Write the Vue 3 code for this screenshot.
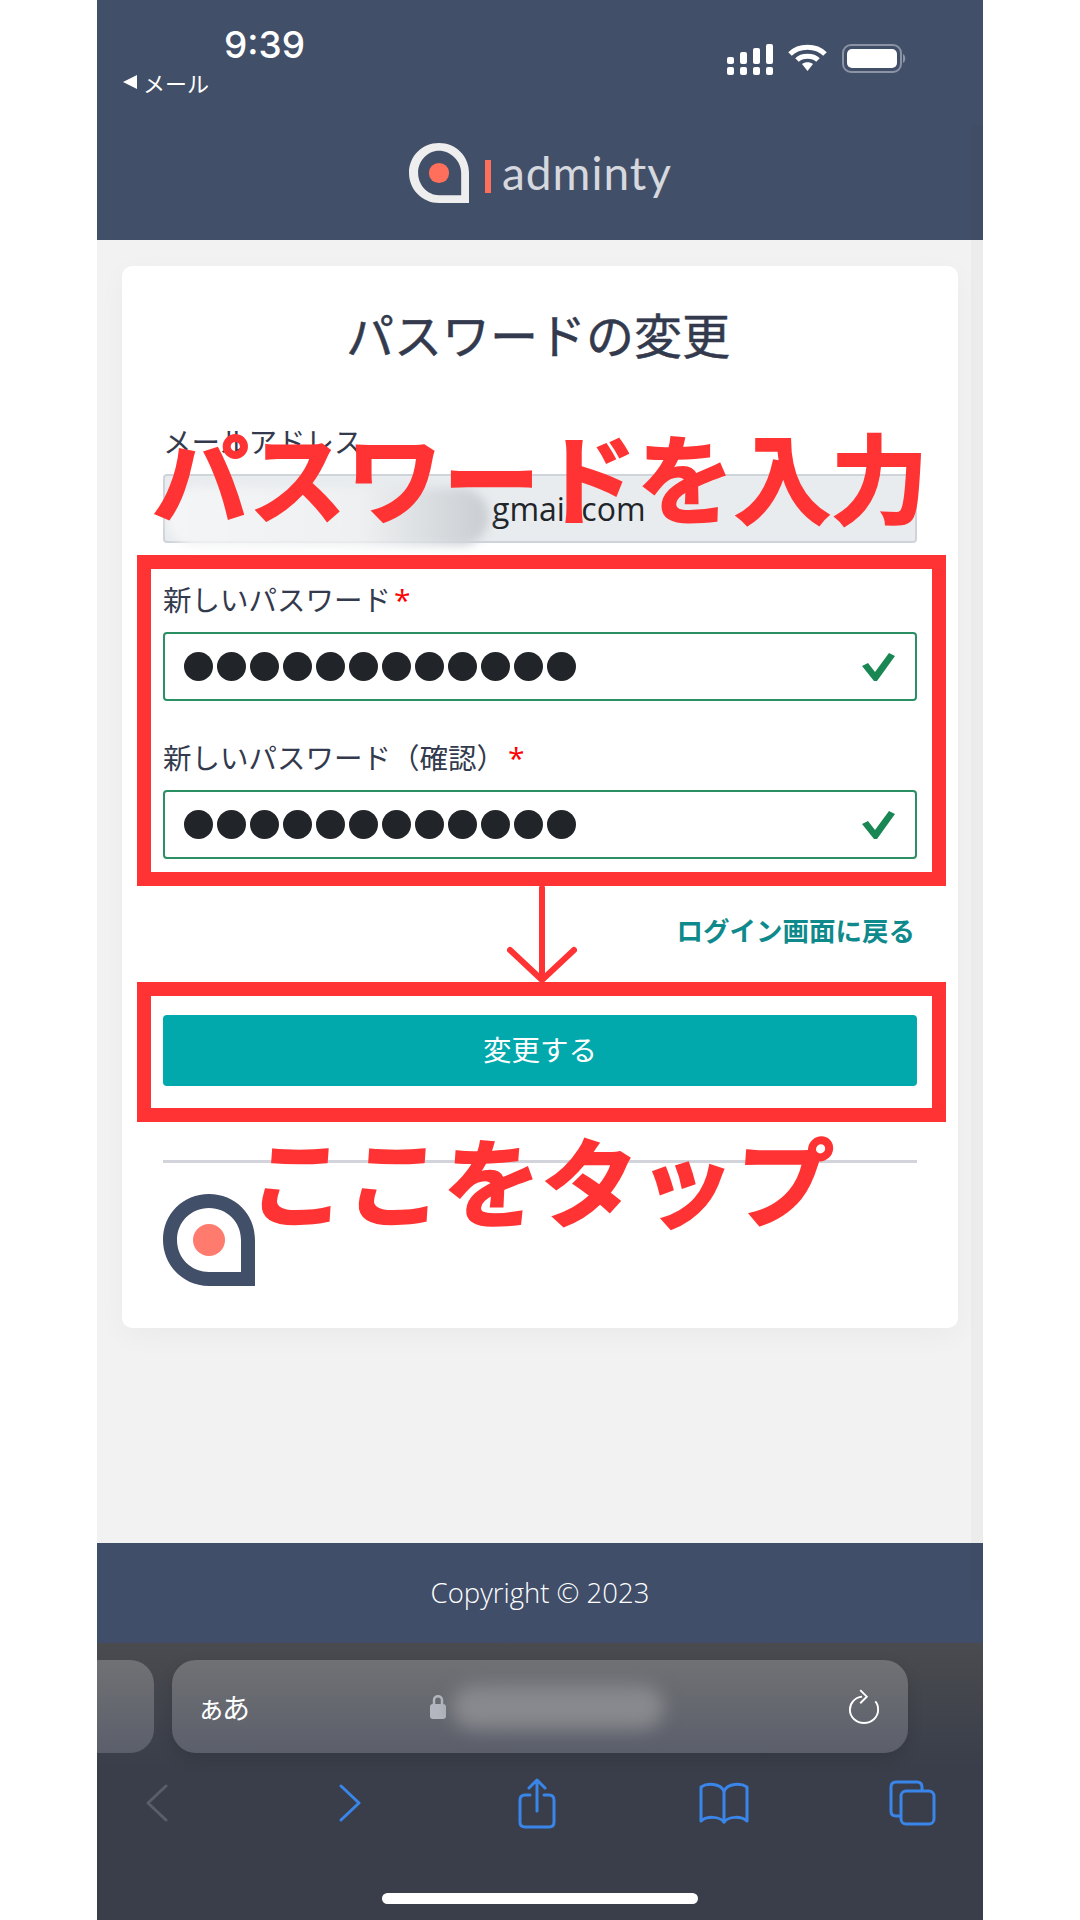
<template>
  <div class="screen">
    <div class="phone">
      <header class="site-header">
        <div class="status">
          <div class="status-left">
            <div class="time">9:39</div>
            <div class="back-app"><span class="back-tri"></span>メール</div>
          </div>
          <div class="status-right">
            <svg width="46" height="31" viewBox="0 0 46 31" fill="#fff">
              <rect x="0" y="13" width="7" height="7" rx="2" />
              <rect x="0" y="23" width="7" height="8" rx="2" />
              <rect x="13" y="8" width="7" height="12" rx="2" />
              <rect x="13" y="23" width="7" height="8" rx="2" />
              <rect x="26" y="4" width="7" height="16" rx="2" />
              <rect x="26" y="23" width="7" height="8" rx="2" />
              <rect x="39" y="0" width="7" height="20" rx="2" />
              <rect x="39" y="23" width="7" height="8" rx="2" />
            </svg>
            <svg width="39" height="28" viewBox="0 0 39 28" fill="none" stroke="#fff" stroke-width="5">
              <path d="M2 10 C11 1 28 1 37 10" />
              <path d="M9 16 C14 11 25 11 30 16" />
              <path d="M14 20 L19.500 27 L25 20 C22 17.500 17 17.500 14 20 Z" fill="#fff" stroke="none" />
            </svg>
            <svg width="64" height="29" viewBox="0 0 64 29">
              <rect x="1" y="1" width="58" height="27" rx="8" fill="none" stroke="#8b93a5" stroke-width="2" />
              <rect x="5" y="5" width="50" height="19" rx="5" fill="#fff" />
              <path d="M61 10 C64 11 64 18 61 19 Z" fill="#8b93a5" />
            </svg>
          </div>
        </div>
        <div class="brand">
          <svg class="brand-mark" width="60" height="60" viewBox="0 0 92 92">
            <path d="M92 92 H46 C20 92 0 71 0 46 C0 20 20 0 46 0 C72 0 92 20 92 46 Z M80 80 V46 C80 28 64 12 46 12 C28 12 14 28 14 46 C14 64 28 80 46 80 Z" fill="#eeeeee" fill-rule="evenodd" />
            <circle cx="46" cy="46" r="15.500" fill="#ff6f5c" />
          </svg>
          <span class="brand-bar"></span>
          <span class="brand-name">adminty</span>
        </div>
      </header>

      <main class="content">
        <section class="card">
          <h1 class="title">パスワードの変更</h1>
          <label class="label label-mail">メールアドレス</label>
          <div class="input input-mail">
            <span class="blur"></span>
            gmail.com
          </div>

          <div class="frame frame-fields">
            <label class="label">新しいパスワード<em>*</em></label>
            <div class="input input-valid">
              <span class="dots"><i v-for="n in 12" :key="n"></i></span>
              <svg width="33" height="28" viewBox="0 0 33 28">
                <path d="M0 13 L6 10 L13 19 L27 0 L33 3 L15 28 L12 28 Z" fill="#198754" />
              </svg>
            </div>
            <label class="label label-second">新しいパスワード（確認）<em>*</em></label>
            <div class="input input-valid">
              <span class="dots"><i v-for="n in 12" :key="n"></i></span>
              <svg width="33" height="28" viewBox="0 0 33 28">
                <path d="M0 13 L6 10 L13 19 L27 0 L33 3 L15 28 L12 28 Z" fill="#198754" />
              </svg>
            </div>
          </div>

          <a class="login-link">ログイン画面に戻る</a>

          <div class="frame frame-button">
            <button class="submit">変更する</button>
          </div>

          <hr class="rule" />

          <svg class="foot-mark" width="92" height="92" viewBox="0 0 92 92">
            <path d="M92 92 H46 C20 92 0 71 0 46 C0 20 20 0 46 0 C72 0 92 20 92 46 Z M78 78 V46 C78 28 64 14 46 14 C28 14 14 28 14 46 C14 64 28 78 46 78 Z" fill="#424f68" fill-rule="evenodd" />
            <circle cx="46" cy="46" r="16" fill="#ff7b6e" />
          </svg>
        </section>
      </main>

      <footer class="site-footer">Copyright © 2023</footer>

      <div class="safari">
        <div class="url-row">
          <div class="prev-tab"></div>
          <div class="url-bar">
            <span class="aa">ぁあ</span>
            <svg class="lock" width="16" height="25" viewBox="0 0 16 25">
              <path d="M4 11 V6 C4 1 12 1 12 6 V11" fill="none" stroke="#b5b7c0" stroke-width="2.500" />
              <rect x="0" y="10" width="16" height="15" rx="3" fill="#b5b7c0" />
            </svg>
            <span class="url-blur"></span>
            <svg class="reload" width="32" height="38" viewBox="0 0 34 38" fill="none" stroke="#fff" stroke-width="2">
              <path d="M15 8 C7 9 2 15 2 22 C2 30 9 36 17 36 C25 36 32 30 32 22 C32 18 31 15 29 13" />
              <path d="M13 1 L20 8 L13 15" />
            </svg>
          </div>
        </div>
        <nav class="tools">
          <svg class="tool" width="22" height="38" viewBox="0 0 22 38" fill="none" stroke="#5a5e68" stroke-width="3" stroke-linecap="round" stroke-linejoin="round">
            <path d="M20 2 L2 19 L20 36" />
          </svg>
          <svg class="tool" width="22" height="38" viewBox="0 0 22 38" fill="none" stroke="#3a85ea" stroke-width="3" stroke-linecap="round" stroke-linejoin="round">
            <path d="M2 2 L20 19 L2 36" />
          </svg>
          <svg class="tool" width="38" height="51" viewBox="0 0 38 51" fill="none" stroke="#3a85ea" stroke-width="3" stroke-linecap="round" stroke-linejoin="round">
            <path d="M12 17 H7 Q2 17 2 22 V44 Q2 49 7 49 H31 Q36 49 36 44 V22 Q36 17 31 17 H26" />
            <path d="M19 33 V2 M11 10 L19 2 L27 10" />
          </svg>
          <svg class="tool" width="50" height="42" viewBox="0 0 50 42" fill="none" stroke="#3a85ea" stroke-width="3" stroke-linecap="round" stroke-linejoin="round">
            <path d="M25 9 C21 1 8 1 2 5 V39 C8 34 20 34 25 40 C30 34 42 34 48 39 V5 C42 1 29 1 25 9 Z" />
            <path d="M25 9 V40" />
          </svg>
          <svg class="tool" width="47" height="46" viewBox="0 0 47 46" fill="none" stroke="#3a85ea" stroke-width="3" stroke-linecap="round" stroke-linejoin="round">
            <path d="M11 36 H7 Q2 36 2 31 V7 Q2 2 7 2 H28 Q33 2 33 7 V10" />
            <rect x="12" y="11" width="33" height="33" rx="5" />
          </svg>
        </nav>
        <div class="home-bar"></div>
      </div>
      <span class="scroll-strip"></span>
    </div>

    <div class="note note-top">パスワードを入力</div>
    <div class="note note-bottom">ここをタップ</div>
    <svg class="arrow" width="70" height="97" viewBox="0 0 70 97" fill="none" stroke="#ff3333" stroke-width="6" stroke-linecap="round" stroke-linejoin="round">
      <path d="M35 2 V94 M3 64 L35 94 L67 64" />
    </svg>
  </div>
</template>

<script setup>
</script>

<style>
html,
body {
  margin: 0;
  background: #fff;
}
</style>

<style scoped>
.screen {
  position: relative;
  width: 1080px;
  height: 1920px;
  overflow: hidden;
  background: #fff;
  font-family: "Open Sans", "Noto Sans CJK JP", sans-serif;
}
.phone {
  position: relative;
  display: flex;
  flex-direction: column;
  width: 886px;
  height: 1920px;
  margin-left: 97px;
}
.scroll-strip {
  position: absolute;
  top: 125px;
  right: 0;
  width: 12px;
  height: 1475px;
  background: rgba(0, 0, 0, 0.025);
}
.site-header {
  height: 240px;
  flex: none;
  background: #424f68;
  box-sizing: border-box;
  padding-top: 26px;
}
.status {
  display: flex;
  justify-content: space-between;
  align-items: flex-start;
  padding: 0 77px 0 26px;
  height: 112px;
}
.time {
  margin-left: 101px;
  color: #fff;
  font: 500 37px/38px Inter, sans-serif;
}
.back-app {
  display: flex;
  align-items: center;
  gap: 6px;
  margin-top: 4px;
  color: #fff;
  font: 22px/28px "Noto Sans CJK JP", sans-serif;
}
.back-tri {
  width: 0;
  height: 0;
  border-top: 7px solid transparent;
  border-bottom: 7px solid transparent;
  border-right: 14px solid #fff;
}
.status-right {
  display: flex;
  align-items: flex-start;
  gap: 15px;
  margin-top: 18px;
}
.brand {
  display: flex;
  align-items: center;
  padding-left: 312px;
  margin-top: 5px;
}
.brand-bar {
  width: 6px;
  height: 33px;
  margin: 6px 11px 0 16px;
  background: #ff6f5c;
}
.brand-name {
  color: #d5d8de;
  font: 400 46px/60px Lato, sans-serif;
  letter-spacing: 1px;
}
.content {
  flex: 1;
  background: #f2f2f2;
  padding: 26px 25px 0;
}
.card {
  height: 1062px;
  box-sizing: border-box;
  padding: 0 41px;
  background: #fff;
  border-radius: 10px;
  box-shadow: 0 8px 30px rgba(0, 0, 0, 0.035);
}
.title {
  margin: 0;
  padding: 43px 4px 0 0;
  color: #333a4d;
  font: 400 48px/48px "Noto Sans CJK JP", sans-serif;
  -webkit-text-stroke: 0.5px #333a4d;
  text-align: center;
}
.label {
  display: block;
  color: #333a4d;
  font: 400 28.500px/40px "Noto Sans CJK JP", sans-serif;
}
.label em {
  margin-left: 3px;
  color: #f00;
  font: 400 30px/0 "Open Sans", sans-serif;
}
.label-mail {
  margin-top: 64px;
}
.label-second {
  margin-top: 36px;
}
.input {
  position: relative;
  display: flex;
  align-items: center;
  justify-content: space-between;
  box-sizing: border-box;
  height: 69px;
  margin-top: 13px;
  border: 2px solid #ced4da;
  border-radius: 4px;
  color: #212529;
  font-size: 32px;
}
.input-mail {
  justify-content: flex-start;
  padding-left: 327px;
  background: #e9ecef;
}
.blur {
  position: absolute;
  left: 2px;
  top: 12px;
  width: 322px;
  height: 58px;
  border-radius: 29px;
  background: linear-gradient(90deg, #f4f5f6 0%, #eef0f1 60%, #c9cdd1 100%);
  filter: blur(5px);
}
.input-valid {
  margin-top: 13px;
  padding: 0 20px 0 19px;
  border-color: #2a8f63;
  background: #fff;
}
.dots {
  display: flex;
  gap: 4px;
}
.dots i {
  width: 29px;
  height: 29px;
  border-radius: 50%;
  background: #212529;
}
.frame {
  margin: 0 -29px 0 -26px;
  border: 14px solid #ff3333;
}
.frame-fields {
  margin-top: 12px;
  padding: 10px 15px 13px 12px;
}
.login-link {
  display: block;
  margin-top: 24px;
  padding-right: 2px;
  color: #0f8a8c;
  font: 700 26.500px/40px "Noto Sans CJK JP", sans-serif;
  text-align: right;
}
.frame-button {
  margin-top: 32px;
  padding: 19px 15px 22px 12px;
}
.submit {
  display: block;
  width: 100%;
  height: 71px;
  padding: 0 0 4px;
  border: 0;
  border-radius: 4px;
  background: #02a9ac;
  color: #fff;
  font: 400 28.500px/40px "Noto Sans CJK JP", sans-serif;
}
.rule {
  height: 3px;
  margin: 38px 0 0;
  border: 0;
  background: #d3d3db;
}
.foot-mark {
  display: block;
  margin-top: 31px;
}
.site-footer {
  height: 100px;
  flex: none;
  background: #404e69;
  color: #fff;
  font-size: 27.500px;
  font-weight: 300;
  line-height: 100px;
  text-align: center;
}
.safari {
  position: relative;
  height: 277px;
  flex: none;
  background: linear-gradient(180deg, #4a4b4f 0%, #393e4a 45%, #393e4a 100%);
}
.url-row {
  display: flex;
  gap: 18px;
  padding-top: 17px;
}
.prev-tab {
  width: 57px;
  height: 93px;
  border-radius: 0 24px 24px 0;
  background: linear-gradient(180deg, #707174, #5b5f6b);
}
.url-bar {
  position: relative;
  display: flex;
  align-items: center;
  width: 736px;
  height: 93px;
  box-sizing: border-box;
  padding: 0 28px 0 25px;
  border-radius: 24px;
  background: linear-gradient(180deg, #707174, #5b5f6b);
  box-shadow: 0 6px 16px rgba(0, 0, 0, 0.12);
}
.aa {
  color: #fff;
  font: 28px/40px "Noto Sans CJK JP", sans-serif;
  letter-spacing: -3px;
}
.lock {
  margin-left: 183px;
}
.url-blur {
  width: 212px;
  height: 44px;
  margin-left: 6px;
  border-radius: 22px;
  background: #88898e;
  filter: blur(9px);
}
.reload {
  margin-left: auto;
}
.tools {
  display: flex;
  align-items: center;
  height: 52px;
  margin-top: 24px;
  padding-left: 49px;
}
.tool:nth-child(2) {
  margin-left: 171px;
}
.tool:nth-child(3) {
  margin-left: 157px;
}
.tool:nth-child(4) {
  margin-left: 143px;
}
.tool:nth-child(5) {
  margin-left: 140px;
}
.home-bar {
  width: 316px;
  height: 11px;
  margin: 64px auto 0;
  border-radius: 6px;
  background: #fff;
}
.note {
  position: absolute;
  color: #ff3333;
  font: 700 97px/110px "Noto Sans CJK JP", sans-serif;
  white-space: nowrap;
  -webkit-text-stroke: 2px #ff3333;
}
.note-top {
  left: 152px;
  top: 419px;
}
.note-bottom {
  left: 250px;
  top: 1123px;
  transform: skewX(-4deg);
}
.arrow {
  position: absolute;
  left: 507px;
  top: 886px;
}
</style>
